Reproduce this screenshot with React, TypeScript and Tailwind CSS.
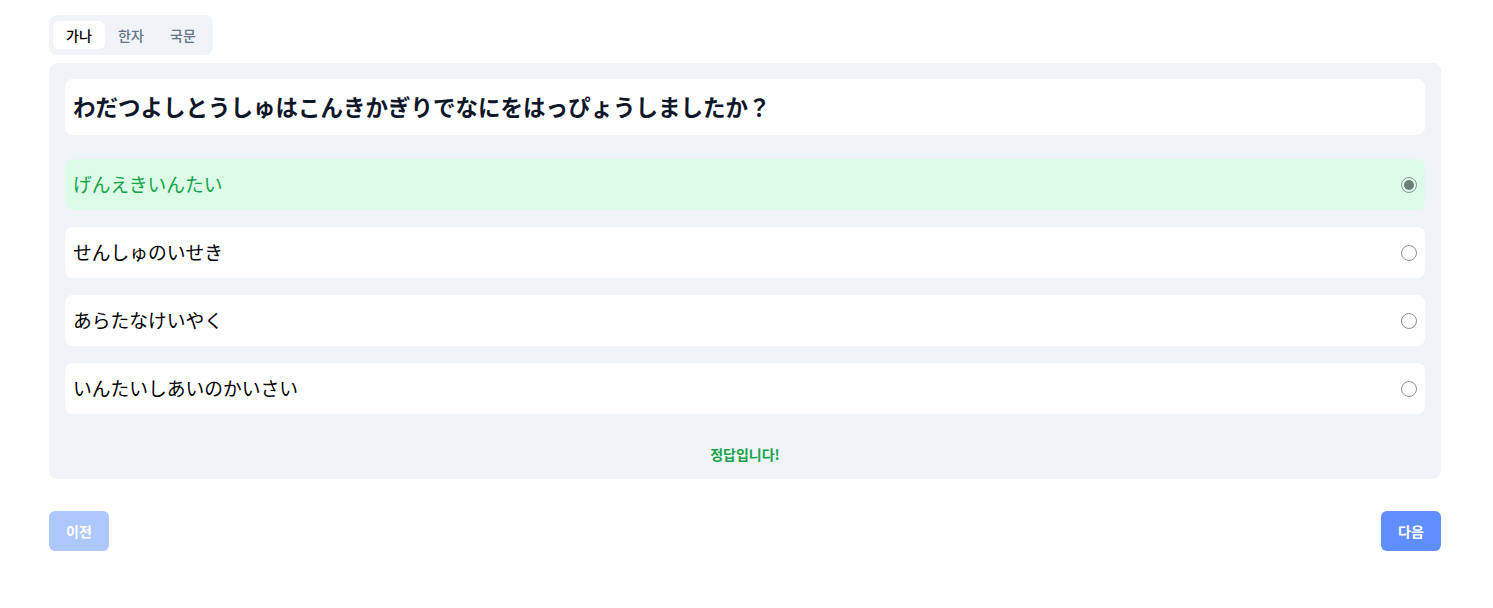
import { useState } from 'react';

const tabs = ['가나', '한자', '국문'];

const options = [
  'げんえきいんたい',
  'せんしゅのいせき',
  'あらたなけいやく',
  'いんたいしあいのかいさい',
];

function Radio({ checked }: { checked: boolean }) {
  return (
    <span className="flex h-[16px] w-[16px] items-center justify-center rounded-full border border-[#8d9196]">
      {checked && <span className="h-[10px] w-[10px] rounded-full bg-[#6f7f78]" />}
    </span>
  );
}

export default function App() {
  const [tab, setTab] = useState(0);
  const [picked] = useState(0);

  return (
    <div
      className="min-h-[608px] bg-white pl-[49px] pr-[52px] pt-[15px]"
      style={{ fontFamily: '"Noto Sans CJK KR", "Noto Sans CJK JP", sans-serif' }}
    >
      <div className="inline-flex rounded-lg bg-[#f0f4f8] px-1 py-[6px]">
        {tabs.map((t, i) => (
          <button
            key={t}
            onClick={() => setTab(i)}
            className={
              i === tab
                ? 'h-[28px] w-[52px] rounded-md bg-white text-sm font-medium text-black'
                : 'h-[28px] w-[52px] rounded-md text-sm font-medium text-[#64748b]'
            }
          >
            {t}
          </button>
        ))}
      </div>

      <div className="mt-2 rounded-lg bg-[#f0f4f8] px-4 pb-[15px] pt-4">
        <div
          className="flex h-[56px] items-center rounded-lg bg-white px-2 text-[22.5px] font-bold text-[#0f172a]"
          style={{ fontFamily: '"Noto Sans CJK JP", sans-serif' }}
        >
          わだつよしとうしゅはこんきかぎりでなにをはっぴょうしましたか？
        </div>

        <div className="mt-[24px] flex flex-col gap-[17px]">
          {options.map((o, i) => (
            <label
              key={o}
              className={
                i === picked
                  ? 'flex h-[51px] items-center justify-between rounded-lg bg-[#dcfce7] pl-2 pr-[8px] text-[18.75px] text-[#16a34a]'
                  : 'flex h-[51px] items-center justify-between rounded-lg bg-white pl-2 pr-[8px] text-[18.75px] text-black'
              }
              style={{ fontFamily: '"Noto Sans CJK JP", sans-serif' }}
            >
              <span>{o}</span>
              <Radio checked={i === picked} />
            </label>
          ))}
        </div>

        <div className="mt-[30px] text-center text-sm font-bold leading-5 text-[#16a34a]">
          정답입니다!
        </div>
      </div>

      <div className="mt-[32px] flex justify-between">
        <button className="h-10 w-[60px] rounded-md bg-[#adc7ff] text-sm font-bold text-white">이전</button>
        <button className="h-10 w-[60px] rounded-md bg-[#5f8fff] text-sm font-bold text-white">다음</button>
      </div>
    </div>
  );
}
